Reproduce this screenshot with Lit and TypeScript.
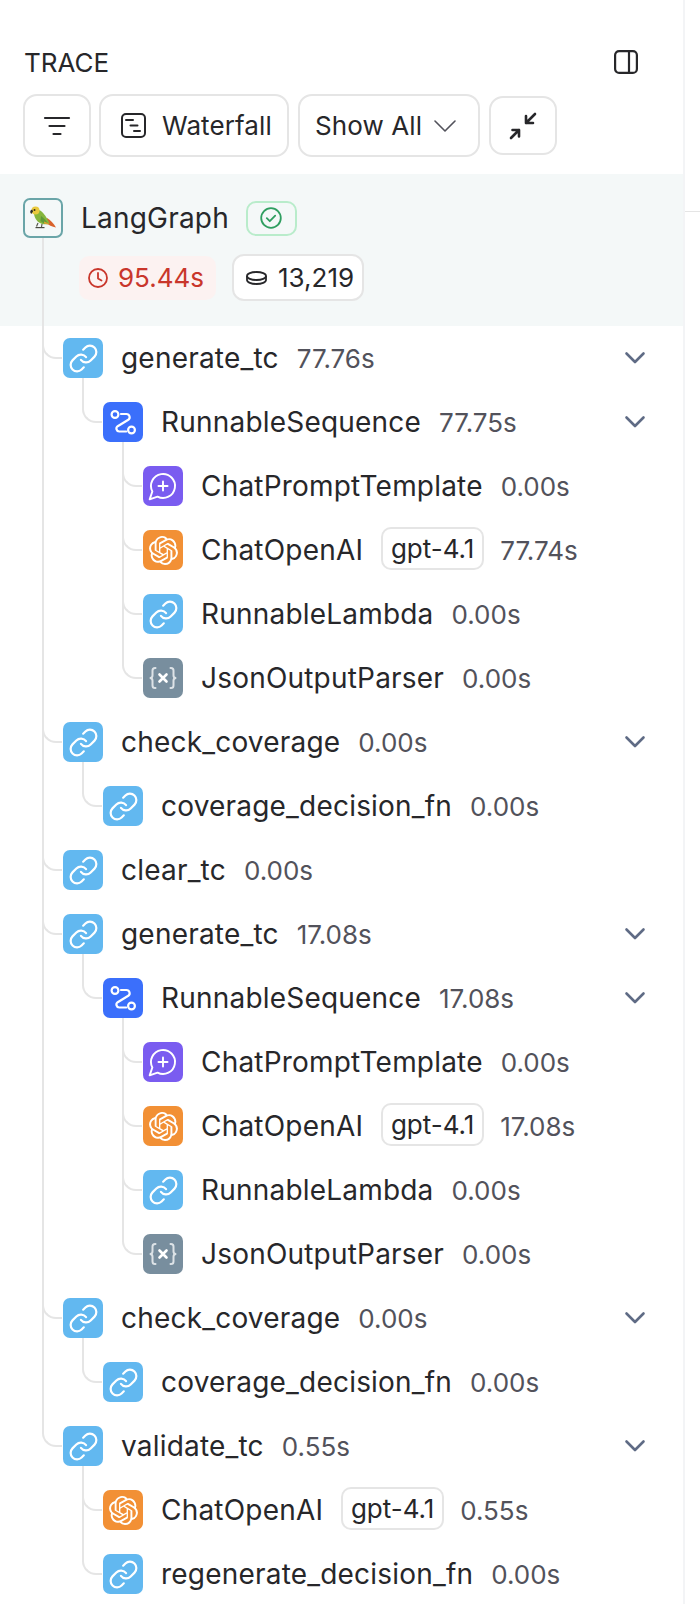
import { LitElement, html, css, svg } from "lit";
import { customElement } from "lit/decorators.js";

type Kind = "link" | "seq" | "prompt" | "openai" | "parser";
interface Row { d: number; k: Kind; n: string; t: string; m?: string; c?: boolean; }

const subtree = (t1: string, t2: string, t3: string): Row[] => [
  { d: 0, k: "link", n: "generate_tc", t: t1, c: true },
  { d: 1, k: "seq", n: "RunnableSequence", t: t2, c: true },
  { d: 2, k: "prompt", n: "ChatPromptTemplate", t: "0.00s" },
  { d: 2, k: "openai", n: "ChatOpenAI", t: t3, m: "gpt-4.1" },
  { d: 2, k: "link", n: "RunnableLambda", t: "0.00s" },
  { d: 2, k: "parser", n: "JsonOutputParser", t: "0.00s" },
  { d: 0, k: "link", n: "check_coverage", t: "0.00s", c: true },
  { d: 1, k: "link", n: "coverage_decision_fn", t: "0.00s" },
];

const rows: Row[] = [
  ...subtree("77.76s", "77.75s", "77.74s"),
  { d: 0, k: "link", n: "clear_tc", t: "0.00s" },
  ...subtree("17.08s", "17.08s", "17.08s"),
  { d: 0, k: "link", n: "validate_tc", t: "0.55s", c: true },
  { d: 1, k: "openai", n: "ChatOpenAI", t: "0.55s", m: "gpt-4.1" },
  { d: 1, k: "link", n: "regenerate_decision_fn", t: "0.00s" },
];

const OPENAI =
  "M22.2819 9.8211a5.9847 5.9847 0 0 0-.5157-4.9108 6.0462 6.0462 0 0 0-6.5098-2.9A6.0651 6.0651 0 0 0 4.9807 4.1818a5.9847 5.9847 0 0 0-3.9977 2.9 6.0462 6.0462 0 0 0 .7427 7.0966 5.98 5.98 0 0 0 .511 4.9107 6.051 6.051 0 0 0 6.5146 2.9001A5.9847 5.9847 0 0 0 13.2599 24a6.0557 6.0557 0 0 0 5.7718-4.2058 5.9894 5.9894 0 0 0 3.9977-2.9001 6.0557 6.0557 0 0 0-.7475-7.0729zm-9.022 12.6081a4.4755 4.4755 0 0 1-2.8764-1.0408l.1419-.0804 4.7783-2.7582a.7948.7948 0 0 0 .3927-.6813v-6.7369l2.02 1.1686a.071.071 0 0 1 .038.052v5.5826a4.504 4.504 0 0 1-4.4945 4.4944zm-9.6607-4.1254a4.4708 4.4708 0 0 1-.5346-3.0137l.142.0852 4.783 2.7582a.7712.7712 0 0 0 .7806 0l5.8428-3.3685v2.3324a.0804.0804 0 0 1-.0332.0615L9.74 19.9502a4.4992 4.4992 0 0 1-6.1408-1.6464zM2.3408 7.8956a4.485 4.485 0 0 1 2.3655-1.9728V11.6a.7664.7664 0 0 0 .3879.6765l5.8144 3.3543-2.0201 1.1685a.0757.0757 0 0 1-.071 0l-4.8303-2.7865A4.504 4.504 0 0 1 2.3408 7.872zm16.5963 3.8558L13.1038 8.364 15.1192 7.2a.0757.0757 0 0 1 .071 0l4.8303 2.7913a4.4944 4.4944 0 0 1-.6765 8.1042v-5.6772a.79.79 0 0 0-.407-.667zm2.0107-3.0231l-.142-.0852-4.7735-2.7818a.7759.7759 0 0 0-.7854 0L9.409 9.2297V6.8974a.0662.0662 0 0 1 .0284-.0615l4.8303-2.7866a4.4992 4.4992 0 0 1 6.6802 4.66zM8.3065 12.863l-2.02-1.1638a.0804.0804 0 0 1-.038-.0567V6.0742a4.4992 4.4992 0 0 1 7.3757-3.4537l-.142.0805L8.704 5.459a.7948.7948 0 0 0-.3927.6813zm1.0976-2.3654l2.602-1.4998 2.6069 1.4998v2.9994l-2.5974 1.4997-2.6067-1.4997Z";

const glyph = (k: Kind) => {
  switch (k) {
    case "link":
      return html`<svg class="ico" viewBox="0 0 24 24" width="31" height="31" fill="none" stroke="#fff" stroke-width="1.7" stroke-linecap="round" stroke-linejoin="round">
        <path d="M10 13a5 5 0 0 0 7.54.54l3-3a5 5 0 0 0-7.07-7.07l-1.72 1.71" />
        <path d="M14 11a5 5 0 0 0-7.54-.54l-3 3a5 5 0 0 0 7.07 7.07l1.71-1.71" />
      </svg>`;
    case "seq":
      return html`<svg class="ico" viewBox="0 0 40 40" width="40" height="40" fill="none" stroke="#fff" stroke-width="2.2" stroke-linecap="round" stroke-linejoin="round">
        <circle cx="12" cy="12.5" r="3.4" />
        <circle cx="28.5" cy="28" r="3.4" />
        <path d="M18 12h5.5a3.2 3.2 0 0 1 1.8 5.8l-10.6 6.4a2.9 2.9 0 0 0 1.5 5.3h7" />
      </svg>`;
    case "prompt":
      return html`<svg class="ico" viewBox="0 0 24 24" width="32" height="32" fill="none" stroke="#fff" stroke-width="1.45" stroke-linecap="round" stroke-linejoin="round">
        <path d="M7.9 20A9 9 0 1 0 4 16.1L2 22Z" />
        <path d="M8.6 12h6.8" />
        <path d="M12 8.6v6.8" />
      </svg>`;
    case "openai":
      return html`<svg class="ico" viewBox="0 0 24 24" width="29" height="29" fill="#fff"><path d=${OPENAI} /></svg>`;
    case "parser":
      return html`<svg class="ico" viewBox="0 0 40 40" width="40" height="40" fill="none" stroke-linecap="round" stroke-linejoin="round">
        <path stroke="#fff" stroke-opacity=".75" stroke-width="2" d="M12.5 10h-.5a2.5 2.5 0 0 0-2.500 2.500v4.700a2.800 2.800 0 0 1-2 2.800 2.800 2.800 0 0 1 2 2.800v4.700a2.500 2.500 0 0 0 2.500 2.500h.5" />
        <path stroke="#fff" stroke-opacity=".75" stroke-width="2" d="M27.5 10h.5a2.500 2.500 0 0 1 2.500 2.500v4.700a2.800 2.800 0 0 0 2 2.800 2.800 2.800 0 0 0-2 2.800v4.700a2.500 2.500 0 0 1-2.500 2.500h-.5" />
        <path stroke="#fff" stroke-width="2.6" d="M16.5 16.5l7 7M23.5 16.5l-7 7" />
      </svg>`;
  }
};

const parrot = svg`
  <path d="M15 25l-1.5 3.5M19 26l-.5 3" stroke="#5a5a50" stroke-width="1.2" fill="none"/>
  <path d="M12.5 29.6h9" stroke="#4a4a42" stroke-width="1.2" fill="none"/>
  <path d="M24 20c3.5 2 6.500 5.500 9 9.500-4-.8-7.500-2.500-10.500-5z" fill="#d9622b"/>
  <path d="M11 13c3.500-2.500 7-.5 9.500 2.500 2.500 3 4.500 6.500 6 10-3 1.500-7.500 1-10.500-1-3.500-2.500-5.500-7-5-11.500z" fill="#86b63c"/>
  <path d="M18 18c2.500 1.500 5 4.500 7 7.500-2.500.5-5.500-.5-7.500-2.500z" fill="#5f9a38"/>
  <path d="M21 23.500c2 .5 3.500 1.500 5 2.500-1.800.5-3.500.3-5-.5z" fill="#d8a32f"/>
  <circle cx="12.500" cy="12.500" r="4" fill="#e9c93e"/>
  <path d="M9.200 11.500c-1.500.3-2.200 1.500-1.900 3 .3.800.8 1.200 1.400 1.300.2-1 .8-1.800 1.400-2.300z" fill="#2b2b2b"/>
  <circle cx="11.500" cy="12" r="1" fill="#3a2a12"/>
`;

@customElement("app-root")
export class AppRoot extends LitElement {
  static styles = css`
    :host {
      display: flex;
      width: 700px;
      height: 1604px;
      overflow: hidden;
      background: #fff;
      font-family: Inter, "Liberation Sans", sans-serif;
      color: #27272a;
    }
    * { box-sizing: border-box; }
    .side {
      width: 685px;
      flex: none;
      height: 100%;
      border-right: 2px solid #f3f4f6;
      display: flex;
      flex-direction: column;
    }
    .main { flex: 1; padding-top: 211px; }
    .main div { border-top: 1px solid #e5e5e5; }
    .top {
      display: flex;
      align-items: center;
      justify-content: space-between;
      height: 94px;
      padding: 33px 45px 1px 24px;
    }
    .panel { margin-top: -2px; }
    .title { font-size: 26px; line-height: 30px; }
    .tools {
      display: flex;
      align-items: center;
      gap: 8px;
      padding-left: 23px;
      height: 63px;
      margin-bottom: 17px;
    }
    .btn {
      display: flex;
      align-items: center;
      justify-content: center;
      height: 63px;
      border: 2px solid #e5e5e5;
      border-radius: 14px;
      background: #fff;
      font-size: 26px;
      letter-spacing: 0.1px;
      color: #27272a;
    }
    .b-filter { width: 68px; }
    .b-water { width: 190px; gap: 16px; justify-content: flex-start; padding-left: 20px; }
    .b-show { width: 182px; gap: 12px; margin-left: 1px; justify-content: flex-start; padding-left: 15px; }
    .b-col { width: 68px; height: 59px; margin-left: 1px; }
    .root {
      position: relative;
      height: 152px;
      background: #f4f8f8;
      padding: 24px 0 0 23px;
      flex: none;
    }
    .root-line {
      position: absolute;
      left: 42px;
      top: 64px;
      bottom: 0;
      width: 2px;
      background: #e5e5e5;
    }
    .root-a { display: flex; align-items: center; height: 40px; }
    .root-ico {
      width: 40px;
      height: 40px;
      border: 2px solid #6aa5a8;
      border-radius: 7px;
      margin-right: 18px;
      flex: none;
    }
    .root-name { font-size: 28px; letter-spacing: 0.2px; }
    .status {
      display: flex;
      align-items: center;
      justify-content: center;
      width: 51px;
      height: 35px;
      border: 2px solid #b9eccb;
      border-radius: 10px;
      margin-left: 17px;
    }
    .root-b {
      display: flex;
      align-items: center;
      gap: 16px;
      margin-top: 16px;
      padding-left: 56px;
    }
    .time {
      display: flex;
      align-items: center;
      gap: 10px;
      height: 44px;
      width: 137px;
      padding-left: 9px;
      border-radius: 10px;
      background: #fcf2f1;
      color: #c9362b;
      font-size: 26px;
    }
    .tok {
      display: flex;
      align-items: center;
      gap: 11px;
      height: 47px;
      width: 132px;
      padding-left: 12px;
      border: 2px solid #e5e5e5;
      border-radius: 12px;
      background: #fff;
      font-size: 26px;
    }
    .tree {
      display: flex;
      flex-direction: column;
      gap: 24px;
      padding-top: 12px;
    }
    .row {
      position: relative;
      display: flex;
      align-items: center;
      height: 40px;
      padding-right: 36px;
    }
    .guide {
      position: absolute;
      top: -24px;
      bottom: 0;
      width: 2px;
      background: #e5e5e5;
    }
    .elbow {
      position: absolute;
      top: -24px;
      height: 45px;
      width: 20px;
      border-left: 2px solid #e5e5e5;
      border-bottom: 2px solid #e5e5e5;
      border-bottom-left-radius: 14px;
    }
    .box {
      position: relative;
      width: 40px;
      height: 40px;
      border-radius: 7px;
      display: flex;
      align-items: center;
      justify-content: center;
      flex: none;
      margin-right: 18px;
    }
    .link { background: #62b8f0; }
    .seq { background: #3b6ffb; }
    .prompt { background: #7a5cf0; }
    .openai { background: #f29035; }
    .parser { background: #788e9e; }
    .name { font-size: 28px; letter-spacing: 0.2px; white-space: nowrap; color: #27272a; }
    .t { font-size: 26px; color: #52525b; margin-left: 18px; white-space: nowrap; }
    .model {
      display: flex;
      align-items: center;
      justify-content: center;
      height: 43px;
      width: 103px;
      margin-left: 18px;
      margin-bottom: 3px;
      border: 2px solid #e5e5e5;
      border-radius: 10px;
      font-size: 26px;
      background: #fff;
    }
    .model + .t { margin-left: 16px; }
    .chev { margin-left: auto; flex: none; }
  `;

  private guides(i: number) {
    const out: number[] = [];
    for (let L = 0; L <= rows[i].d; L++) {
      for (let j = i + 1; j < rows.length; j++) {
        if (rows[j].d < L) break;
        if (rows[j].d === L) { out.push(L); break; }
      }
    }
    return out;
  }

  private row(r: Row, i: number) {
    return html`<div class="row" style="padding-left:${63 + 40 * r.d}px">
      ${this.guides(i).map((L) => html`<span class="guide" style="left:${42 + 40 * L}px"></span>`)}
      <span class="elbow" style="left:${42 + 40 * r.d}px"></span>
      <span class="box ${r.k}">${glyph(r.k)}</span>
      <span class="name">${r.n}</span>
      ${r.m ? html`<span class="model">${r.m}</span>` : ""}
      <span class="t">${r.t}</span>
      ${r.c
        ? html`<svg class="chev" width="24" height="14" viewBox="0 0 24 14" fill="none" stroke="#5f6b85" stroke-width="2.6" stroke-linecap="round" stroke-linejoin="round"><path d="M3.500 2.500l8.500 8.500 8.500-8.500" /></svg>`
        : ""}
    </div>`;
  }

  render() {
    return html`
      <div class="side">
        <div class="top">
          <span class="title">TRACE</span>
          <svg class="panel" width="24" height="24" viewBox="0 0 24 24" fill="none" stroke="#27272a" stroke-width="2.2"><rect x="1.100" y="1.100" width="21.800" height="21.800" rx="4" /><path d="M15 1v22" /></svg>
        </div>
        <div class="tools">
          <div class="btn b-filter">
            <svg width="28" height="22" viewBox="0 0 28 22" fill="none" stroke="#27272a" stroke-width="2.200" stroke-linecap="round"><path d="M2 3h24M6.500 11h15M10.500 19h7" /></svg>
          </div>
          <div class="btn b-water">
            <svg width="25" height="25" viewBox="0 0 25 25" fill="none" stroke="#27272a" stroke-width="2" stroke-linecap="round"><rect x="1" y="1" width="23" height="23" rx="4" /><path d="M5 7h7M9.500 12.500h7M13 18h6" /></svg>
            <span>Waterfall</span>
          </div>
          <div class="btn b-show">
            <span>Show All</span>
            <svg width="22" height="12" viewBox="0 0 22 12" fill="none" stroke="#52525b" stroke-width="1.600" stroke-linecap="round" stroke-linejoin="round"><path d="M1 1l10 10L21 1" /></svg>
          </div>
          <div class="btn b-col">
            <svg width="28" height="28" viewBox="0 0 28 28" fill="none" stroke="#27272a" stroke-width="2.600" stroke-linecap="round" stroke-linejoin="round"><path d="M26 2l-9 9M17 4v7h7M2 26l8-8M3.500 18H10v6.500" /></svg>
          </div>
        </div>
        <div class="root">
          <span class="root-line"></span>
          <div class="root-a">
            <div class="root-ico">
              <svg width="36" height="36" viewBox="2 2 36 36">${parrot}</svg>
            </div>
            <span class="root-name">LangGraph</span>
            <div class="status">
              <svg width="22" height="22" viewBox="0 0 22 22" fill="none" stroke="#2f9e60" stroke-width="1.800" stroke-linecap="round" stroke-linejoin="round"><circle cx="11" cy="11" r="9.800" /><path d="M6.800 11.200l3 3 5.400-5.600" /></svg>
            </div>
          </div>
          <div class="root-b">
            <div class="time">
              <svg width="20" height="20" viewBox="0 0 20 20" fill="none" stroke="#c9362b" stroke-width="1.800" stroke-linecap="round" stroke-linejoin="round"><circle cx="10" cy="10" r="9" /><path d="M10 5v5.500l3.500 2" /></svg>
              <span>95.44s</span>
            </div>
            <div class="tok">
              <svg width="21" height="14" viewBox="0 0 21 14" fill="none" stroke="#27272a" stroke-width="1.800"><ellipse cx="10.500" cy="5" rx="9.500" ry="4" /><path d="M1 5v4c0 2.200 4.300 4 9.500 4s9.500-1.800 9.500-4V5" /></svg>
              <span>13,219</span>
            </div>
          </div>
        </div>
        <div class="tree">${rows.map((r, i) => this.row(r, i))}</div>
      </div>
      <div class="main"><div></div></div>
    `;
  }
}
